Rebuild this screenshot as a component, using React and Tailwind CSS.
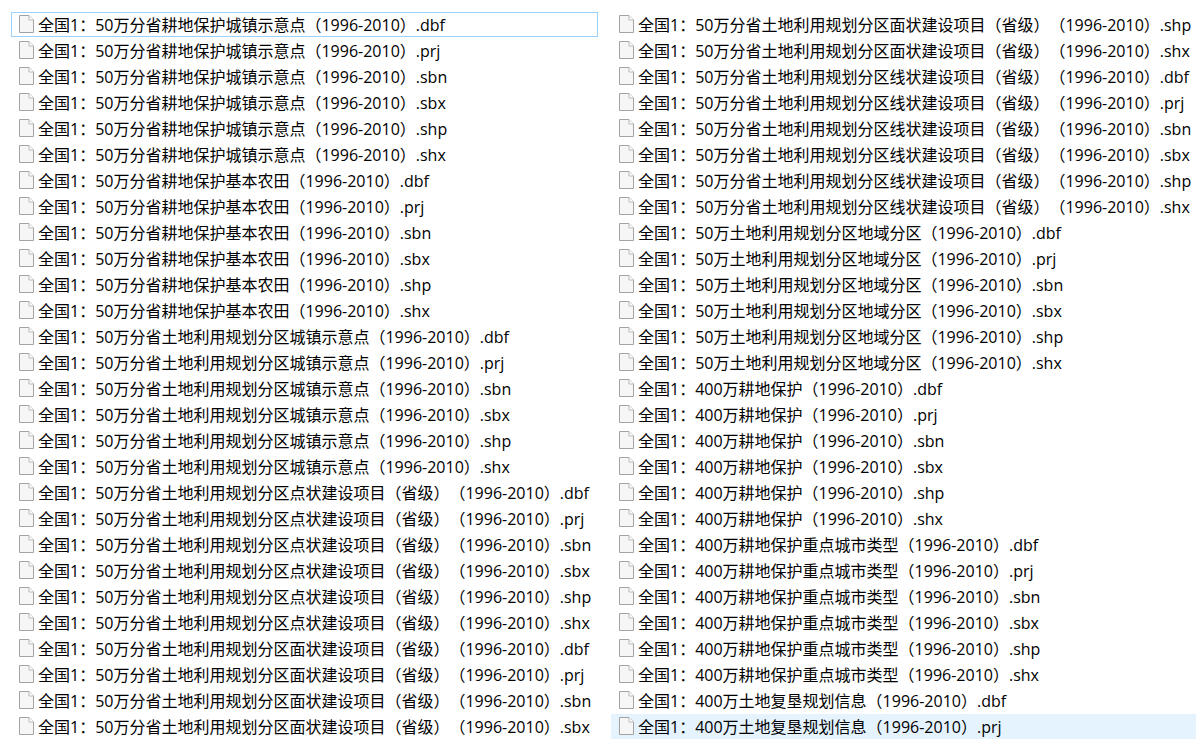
import React from 'react';

const exts = ['dbf', 'prj', 'sbn', 'sbx', 'shp', 'shx'];
const period = '（1996-2010）';

function group(name, list = exts) {
  return list.map(ext => `全国1：${name}${period}.${ext}`);
}

const left = [
  ...group('50万分省耕地保护城镇示意点'),
  ...group('50万分省耕地保护基本农田'),
  ...group('50万分省土地利用规划分区城镇示意点'),
  ...group('50万分省土地利用规划分区点状建设项目（省级）'),
  ...group('50万分省土地利用规划分区面状建设项目（省级）', ['dbf', 'prj', 'sbn', 'sbx']),
];

const right = [
  ...group('50万分省土地利用规划分区面状建设项目（省级）', ['shp', 'shx']),
  ...group('50万分省土地利用规划分区线状建设项目（省级）'),
  ...group('50万土地利用规划分区地域分区'),
  ...group('400万耕地保护'),
  ...group('400万耕地保护重点城市类型'),
  ...group('400万土地复垦规划信息', ['dbf', 'prj']),
];

function FileIcon() {
  return (
    <svg width="15" height="18" viewBox="0 0 15 18" className="shrink-0 mb-px">
      <path d="M.5 .5H10L14.5 5V17.5H.5Z" fill="#f6f6f6" stroke="#a3a3a3" />
      <path d="M10 .5V5H14.5" fill="#ffffff" stroke="#b8b8b8" />
    </svg>
  );
}

function Row({ name, state }) {
  const styles = {
    focused: 'border border-[#99d1ff]',
    selected: 'border border-transparent bg-[#e5f3ff]',
  };
  return (
    <div className={`flex items-center h-[25px] pl-[7px] gap-[4px] ${styles[state] ?? 'border border-transparent'}`}>
      <FileIcon />
      {/* ）（ must keep full width, the browser trims the pair by default */}
      <span className="text-[16px] leading-none text-black whitespace-pre [text-spacing-trim:space-all]">{name}</span>
    </div>
  );
}

export default function App() {
  return (
    <div
      className="w-[1196px] h-[750px] overflow-hidden bg-white flex pt-3 pl-[11px] gap-[13px]"
      style={{ fontFamily: '"Open Sans", "Noto Sans CJK SC", sans-serif' }}
    >
      <div className="w-[587px] flex flex-col gap-px">
        {left.map((name, i) => (
          <Row key={name} name={name} state={i === 0 ? 'focused' : undefined} />
        ))}
      </div>
      <div className="flex-1 flex flex-col gap-px">
        {right.map((name, i) => (
          <Row key={name} name={name} state={i === right.length - 1 ? 'selected' : undefined} />
        ))}
      </div>
    </div>
  );
}
